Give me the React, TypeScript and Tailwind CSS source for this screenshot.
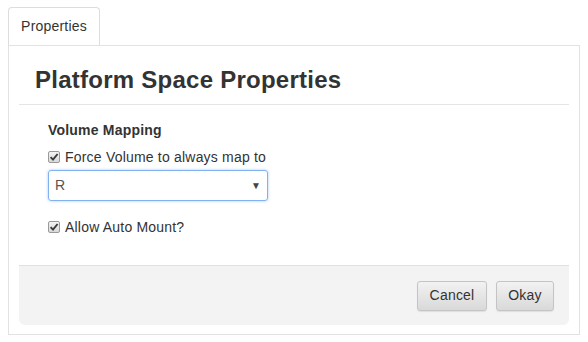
import React from 'react';

const font = { fontFamily: '"Liberation Sans", Arial, sans-serif' };

function CheckMark() {
  return (
    <span className="mr-[5px] inline-flex h-[12px] w-[12px] items-center justify-center rounded-[2px] border border-[#9a9a9a] bg-gradient-to-b from-[#f4f4f4] to-[#d9d9d9]">
      <svg width="10" height="10" viewBox="0 0 10 10" className="block">
        <path d="M1.6 5.2 L4 7.6 L8.6 2" fill="none" stroke="#3a3a3a" strokeWidth="1.9" />
      </svg>
    </span>
  );
}

const buttonStyles =
  'h-[30px] rounded-[3px] border border-[#c4c4c4] bg-gradient-to-b from-[#f2f2f2] to-[#d9d9d9] text-[14px] tracking-[0.2px] text-[#333] shadow-[0_1px_1px_rgba(0,0,0,0.08)]';

export default function App() {
  return (
    <div className="min-h-[342px] bg-white pl-[8px] pt-[7px] text-[14px] tracking-[0.2px] text-[#333]" style={font}>
      <div className="w-[572px]">
        <div className="flex">
          <div className="flex h-[38px] w-[92px] items-center justify-center rounded-t-[4px] border border-b-0 border-[#dddddd] bg-white pb-[1px] text-[14px] text-[#333]">
            Properties
          </div>
        </div>

        <div className="border border-[#e2e2e2] px-[10px] pb-[9px] pt-[10px]">
          <div className="flex h-[49px] items-center border-b border-[#e5e5e5] pl-[16px]">
            <h3 className="text-[24px] font-bold leading-none tracking-[0.25px] text-[#333]">Platform Space Properties</h3>
          </div>

          <div className="pb-[28px] pl-[29px] pt-[15px]">
            <div className="text-[14px] font-bold leading-[20px]">Volume Mapping</div>
            <label className="mt-[7px] flex h-[20px] items-center leading-[20px]">
              <CheckMark />
              Force Volume to always map to
            </label>
            <div className="mt-[3px] flex h-[31px] w-[220px] items-center justify-between rounded-[3px] border border-[#7fb2ee] pl-[6px] pr-[6px] shadow-[0_0_3px_rgba(102,155,233,0.55)]">
              <span className="text-[14px] text-[#555]">R</span>
              <span className="text-[10px] text-[#444]">▼</span>
            </div>
            <label className="mt-[16px] flex h-[20px] items-center leading-[20px]">
              <CheckMark />
              Allow Auto Mount?
            </label>
          </div>

          <div className="flex h-[60px] items-center justify-end gap-[9px] rounded-b-[6px] border-t border-[#e0e0e0] bg-[#f3f3f3] pr-[15px]">
            <button className={`${buttonStyles} w-[70px]`}>Cancel</button>
            <button className={`${buttonStyles} w-[58px]`}>Okay</button>
          </div>
        </div>
      </div>
    </div>
  );
}
